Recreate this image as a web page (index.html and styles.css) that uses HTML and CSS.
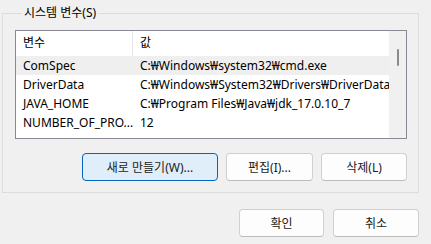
FILE: index.html
```html
<!DOCTYPE html>
<html lang="ko">
<head>
  <meta charset="UTF-8">
  <title>시스템 변수</title>
  <link rel="stylesheet" href="styles.css">
</head>
<body>
  <div class="dialog">
    <fieldset class="group">
      <legend>시스템 변수(S)</legend>

      <div class="list">
        <div class="list-body">
          <div class="row header">
            <div class="cell name">변수</div>
            <div class="cell">값</div>
          </div>
          <div class="row selected">
            <div class="cell name">ComSpec</div>
            <div class="cell">C:₩Windows₩system32₩cmd.exe</div>
          </div>
          <div class="row">
            <div class="cell name">DriverData</div>
            <div class="cell">C:₩Windows₩System32₩Drivers₩DriverData</div>
          </div>
          <div class="row">
            <div class="cell name">JAVA_HOME</div>
            <div class="cell">C:₩Program Files₩Java₩jdk_17.0.10_7</div>
          </div>
          <div class="row">
            <div class="cell name">NUMBER_OF_PRO...</div>
            <div class="cell">12</div>
          </div>
        </div>
        <div class="scrollbar">
          <div class="thumb"></div>
        </div>
      </div>

      <div class="actions">
        <button class="btn default new">새로 만들기(W)...</button>
        <button class="btn edit">편집(I)...</button>
        <button class="btn delete">삭제(L)</button>
      </div>
    </fieldset>

    <div class="footer">
      <button class="btn ok">확인</button>
      <button class="btn cancel">취소</button>
    </div>
  </div>
</body>
</html>
```

FILE: styles.css
```css
* {
  margin: 0;
  padding: 0;
  box-sizing: border-box;
}

body {
  font-family: "Noto Sans", "Noto Sans CJK KR", sans-serif;
  font-size: 12px;
  color: #000;
  background: #f0f0f0;
  width: 431px;
  height: 244px;
  overflow: hidden;
}

.dialog {
  padding: 5px 12px 0 2px;
}

.group {
  border: 1px solid #dcdcdc;
  padding: 9px 11px 11px 12px;
  min-width: 0;
}

.group legend {
  margin-left: 7px;
  padding: 0 2px;
  line-height: 16px;
}

/* list view */
.list {
  display: flex;
  height: 109px;
  border: 1px solid #8a8894;
  background: #fff;
  overflow: hidden;
}

.list-body {
  flex: 1;
}

.row {
  display: grid;
  grid-template-columns: 117px 1fr;
  height: 19px;
  line-height: 19px;
  white-space: nowrap;
}

.row.header {
  height: 25px;
  line-height: 24px;
}

.row.header .name {
  border-right: 1px solid #e5e5e5;
}

.row.selected {
  background: #efefef;
}

.cell {
  padding-left: 7px;
  overflow: hidden;
}

.scrollbar {
  width: 17px;
  background: #f0f0f0;
  display: flex;
  justify-content: center;
  padding-top: 18px;
}

.thumb {
  width: 2px;
  height: 17px;
  background: #8a8a8a;
  border-radius: 1px;
}

/* buttons */
.actions {
  display: flex;
  justify-content: flex-end;
  gap: 8px;
  margin-top: 14px;
}

.footer {
  display: flex;
  justify-content: flex-end;
  gap: 9px;
  margin-top: 16px;
}

.btn {
  height: 28px;
  font-family: inherit;
  font-size: 12px;
  color: #1b1b1b;
  background: #fdfdfd;
  border: 1px solid #d0d0d0;
  border-bottom-color: #bcbcbc;
  border-radius: 4px;
}

.btn.default {
  background: #e0eef9;
  border: 1px solid #0067c0;
}

.btn.new { width: 136px; }
.btn.edit { width: 87px; }
.btn.delete { width: 86px; }
.btn.ok { width: 85px; }
.btn.cancel { width: 86px; }
```
